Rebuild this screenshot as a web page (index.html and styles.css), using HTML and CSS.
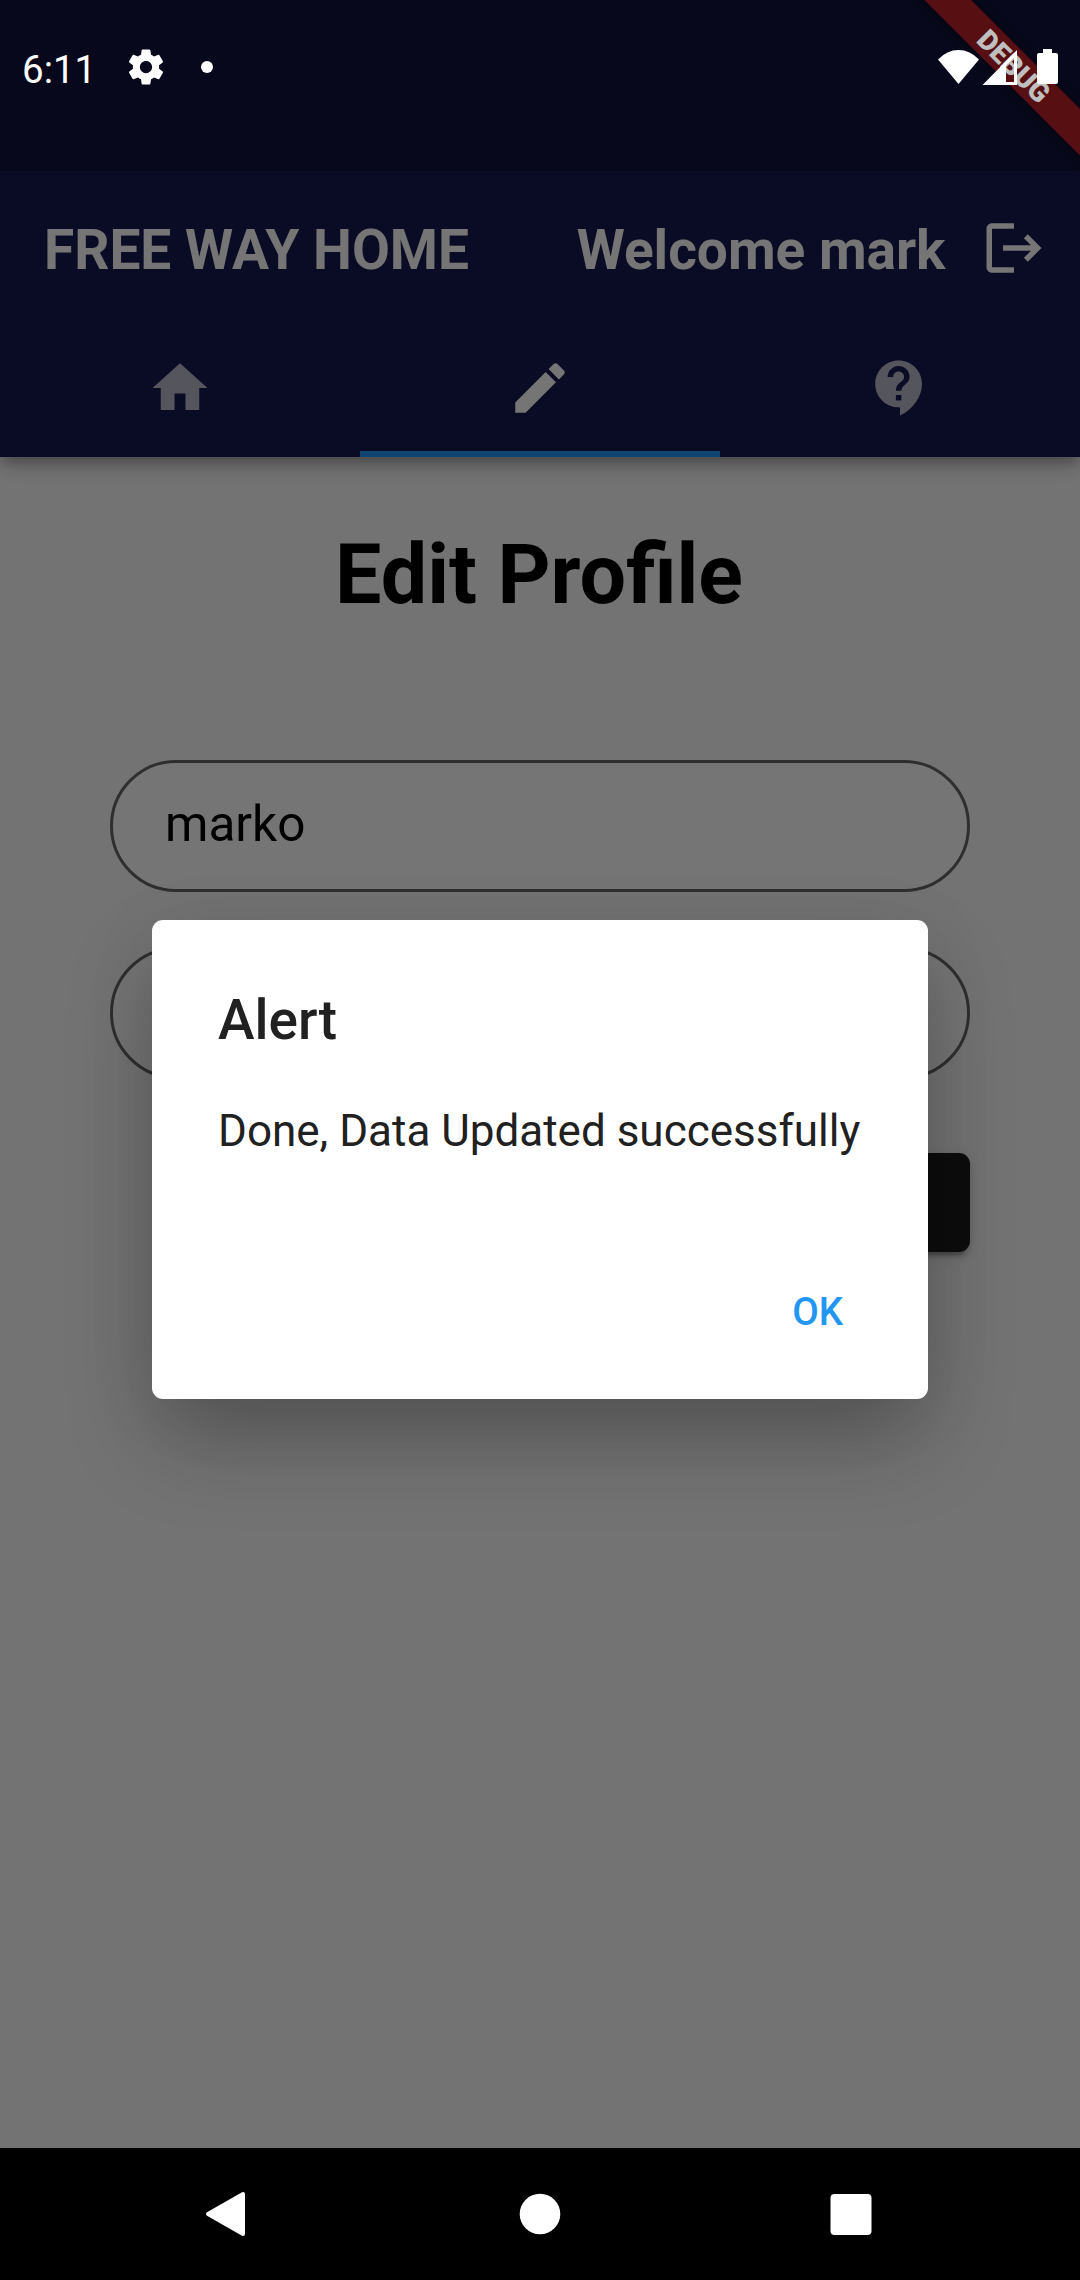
FILE: index.html
```html
<!DOCTYPE html>
<html lang="en">
<head>
<meta charset="utf-8">
<title>Free Way Home</title>
<link rel="stylesheet" href="styles.css">
</head>
<body>
<div class="screen">
  <div class="app">
    <header class="app-header">
      <div class="toolbar">
        <h1 class="brand">FREE WAY HOME</h1>
        <span class="welcome">Welcome mark</span>
        <svg class="icon" viewBox="0 0 24 24"><path d="M17 7l-1.41 1.41L18.17 11H8v2h10.17l-2.58 2.58L17 17l5-5zM4 5h8V3H4c-1.1 0-2 .9-2 2v14c0 1.1.9 2 2 2h8v-2H4V5z"/></svg>
      </div>
      <nav class="tabs">
        <a class="tab"><svg class="icon" viewBox="0 0 24 24"><path d="M10 20v-6h4v6h5v-8h3L12 3 2 12h3v8z"/></svg></a>
        <a class="tab tab-active"><svg class="icon" viewBox="0 0 24 24"><path d="M3 17.25V21h3.75L17.81 9.94l-3.75-3.75L3 17.25zM20.71 7.04c.39-.39.39-1.02 0-1.41l-2.34-2.34c-.39-.39-1.02-.39-1.41 0l-1.83 1.83 3.75 3.75 1.83-1.83z"/></svg></a>
        <a class="tab"><svg class="icon" viewBox="0 0 24 24"><path d="M11.5 2C6.81 2 3 5.81 3 10.5S6.81 19 11.5 19h.5v3c4.86-2.34 8-7 8-11.5C20 5.81 16.19 2 11.5 2zm1 14.5h-2v-2h2v2zm0-3.5h-2c0-3.25 3-3 3-5 0-1.1-.9-2-2-2s-2 .9-2 2h-2c0-2.21 1.79-4 4-4s4 1.79 4 4c0 2.5-3 2.75-3 5z"/></svg></a>
      </nav>
    </header>
    <main class="content">
      <h2 class="page-title">Edit Profile</h2>
      <div class="field">marko</div>
      <div class="field"></div>
      <div class="save-button"></div>
    </main>
  </div>

  <div class="barrier">
    <section class="dialog">
      <h3 class="dialog-title">Alert</h3>
      <p class="dialog-text">Done, Data Updated successfully</p>
      <div class="dialog-actions"><span class="dialog-ok">OK</span></div>
    </section>
  </div>

  <svg class="debug-banner" viewBox="0 0 180 180">
    <g transform="translate(180 0) rotate(45)">
      <rect class="banner-shadow" x="-130" y="77" width="260" height="33"/>
      <rect class="banner-strip" x="-130" y="77" width="260" height="33"/>
      <text class="banner-text" x="0" y="103.5">DEBUG</text>
    </g>
  </svg>

  <div class="status-bar">
    <span class="clock">6:11</span>
    <svg class="gear" viewBox="0 0 24 24"><path d="M19.43 12.98c.04-.32.07-.64.07-.98s-.03-.66-.07-.98l2.11-1.65c.19-.15.24-.42.12-.64l-2-3.46c-.12-.22-.39-.3-.61-.22l-2.49 1c-.52-.4-1.08-.73-1.69-.98l-.38-2.65C14.46 2.18 14.25 2 14 2h-4c-.25 0-.46.18-.49.42l-.38 2.65c-.61.25-1.17.59-1.69.98l-2.49-1c-.23-.09-.49 0-.61.22l-2 3.46c-.13.22-.07.49.12.64l2.11 1.65c-.04.32-.07.65-.07.98s.03.66.07.98l-2.11 1.65c-.19.15-.24.42-.12.64l2 3.46c.12.22.39.3.61.22l2.49-1c.52.4 1.08.73 1.69.98l.38 2.65c.03.24.24.42.49.42h4c.25 0 .46-.18.49-.42l.38-2.65c.61-.25 1.17-.59 1.69-.98l2.49 1c.23.09.49 0 .61-.22l2-3.46c.12-.22.07-.49-.12-.64l-2.11-1.65zM12 15.5c-1.93 0-3.5-1.57-3.5-3.5s1.57-3.5 3.5-3.5 3.5 1.57 3.5 3.5-1.57 3.5-3.5 3.5z"/></svg>
    <span class="dot"></span>
    <svg class="signals" viewBox="0 0 122 36">
      <path d="M20.500 35 L0 10.500 Q9 1 20.500 1 T41 10.500Z"/>
      <path fill-rule="evenodd" d="M44.500 36 L79 1 V36Z M68 16.500 V33 H76 V8.500Z"/>
      <path d="M105 0 h9 v4 h4 a2 2 0 0 1 2 2 v27 a2 2 0 0 1 -2 2 h-17 a2 2 0 0 1 -2 -2 v-27 a2 2 0 0 1 2 -2 h4z"/>
    </svg>
  </div>

  <div class="nav-bar">
    <svg class="nav-icon" viewBox="0 0 48 48"><path d="M42 4 V44 L7 24Z" stroke="#fff" stroke-width="4" stroke-linejoin="round"/></svg>
    <svg class="nav-icon" viewBox="0 0 48 48"><circle cx="24" cy="24" r="20.300"/></svg>
    <svg class="nav-icon" viewBox="0 0 48 48"><rect x="3.500" y="4" width="41" height="41" rx="4"/></svg>
  </div>
</div>
</body>
</html>
```
FILE: styles.css
```css
* {
  box-sizing: border-box;
}

body {
  margin: 0;
  font-family: Roboto, "Liberation Sans", sans-serif;
}

h1, h2, h3, p {
  margin: 0;
}

svg {
  display: block;
  fill: currentColor;
}

.screen {
  position: relative;
  display: flex;
  flex-direction: column;
  width: 1080px;
  height: 2280px;
  overflow: hidden;
  background: #fafafa;
}

.app {
  flex: 1;
}

.app-header {
  position: relative;
  height: 457px;
  padding-top: 171px;
  color: #fff;
  background: #171850;
  box-shadow: 0 5.5px 11px -2.75px rgba(0, 0, 0, .2), 0 11px 13.75px rgba(0, 0, 0, .14), 0 2.75px 27.5px rgba(0, 0, 0, .12);
}

.toolbar {
  display: flex;
  align-items: center;
  height: 154px;
  padding: 0 33.500px 0 44px;
  font-size: 55px;
  font-weight: 700;
}

.brand {
  padding-top: 3px;
  font-size: 55px;
  line-height: 64px;
}

.welcome {
  margin-left: auto;
  margin-right: 35px;
  padding-top: 3px;
  line-height: 64px;
}

.icon {
  width: 66px;
  height: 66px;
}

.tabs {
  display: grid;
  grid-template-columns: repeat(3, 1fr);
  height: 132px;
}

.tab {
  display: flex;
  justify-content: center;
  padding-top: 29.500px;
  color: rgba(255, 255, 255, .7);
}

.tab-active {
  color: #fff;
  border-bottom: 6px solid #2196f3;
}

.content {
  display: flex;
  flex-direction: column;
  padding: 69px 110px 0;
}

.page-title {
  margin-bottom: 135.500px;
  padding-right: 2px;
  font-size: 82.500px;
  line-height: 98px;
  text-align: center;
}

.field {
  height: 132px;
  margin-bottom: 55px;
  padding: 0 52px;
  border: 3px solid #686868;
  border-radius: 66px;
  background: #fff;
  font-size: 49.500px;
  line-height: 123px;
}

.save-button {
  align-self: flex-end;
  width: 242px;
  height: 99px;
  margin-top: 19px;
  border-radius: 11px;
  background: #1e1e1e;
  box-shadow: 0 8px 3px -5px rgba(0, 0, 0, .2), 0 5px 5px rgba(0, 0, 0, .14), 0 3px 14px rgba(0, 0, 0, .12);
}

.barrier {
  position: absolute;
  inset: 0 0 132px;
  display: flex;
  align-items: center;
  justify-content: center;
  padding-top: 171px;
  background: rgba(0, 0, 0, .54);
}

.dialog {
  width: 776px;
  height: 479px;
  padding: 68px 67px 0 66px;
  border-radius: 11px;
  background: #fff;
  color: #212121;
  box-shadow: 0 44px 92px -8px rgba(0, 0, 0, .28), 0 10px 80px 0 rgba(0, 0, 0, .06);
}

.dialog-title {
  font-size: 55px;
  font-weight: 500;
  line-height: 64px;
}

.dialog-text {
  margin-top: 53px;
  font-size: 44px;
  line-height: 52px;
  white-space: nowrap;
}

.dialog-actions {
  display: flex;
  justify-content: flex-end;
  margin-top: 132px;
  padding-right: 18px;
}

.dialog-ok {
  color: #2196f3;
  font-size: 38.500px;
  font-weight: 500;
  line-height: 46px;
}

.debug-banner {
  position: absolute;
  top: 0;
  right: 0;
  width: 180px;
  height: 180px;
}

.banner-shadow {
  fill: rgba(0, 0, 0, .5);
  filter: blur(8px);
}

.banner-strip {
  fill: rgba(183, 28, 28, .63);
}

.banner-text {
  fill: #fff;
  font-size: 28px;
  font-weight: 900;
  text-anchor: middle;
}

.status-bar {
  position: absolute;
  inset: 0 0 auto;
  display: flex;
  align-items: flex-start;
  height: 171px;
  padding: 46px 20px 0 22px;
  color: #fff;
  background: rgba(0, 0, 0, .25);
}

.clock {
  width: 103px;
  padding-top: 1px;
  font-size: 38.500px;
  line-height: 46px;
}

.gear {
  width: 42px;
  height: 42px;
}

.dot {
  width: 12px;
  height: 12px;
  margin: 15px auto 0 34px;
  border-radius: 50%;
  background: #fff;
}

.signals {
  width: 122px;
  height: 36px;
  margin-top: 3px;
}

.nav-bar {
  position: relative;
  display: flex;
  align-items: center;
  justify-content: space-between;
  height: 132px;
  padding: 0 205px 0 201px;
  color: #fff;
  background: #000;
}

.nav-icon {
  width: 48px;
  height: 48px;
}

.nav-icon:nth-child(2) {
  margin-left: 4px;
}
```
